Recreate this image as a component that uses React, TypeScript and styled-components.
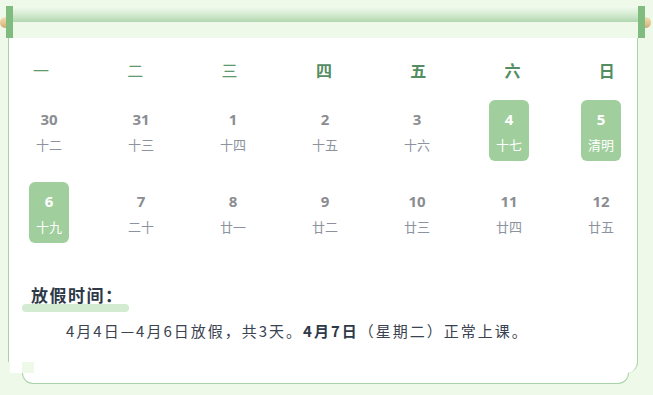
import React from 'react';
import styled, { createGlobalStyle } from 'styled-components';

const GlobalStyle = createGlobalStyle`
  html, body {
    margin: 0;
    padding: 0;
    background: #eff9ea;
  }
  body {
    font-family: "Noto Sans", "Noto Sans CJK SC", sans-serif;
  }
`;

const Page = styled.div`
  width: 653px;
  height: 395px;
  padding-top: 6px;
  box-sizing: border-box;
  background: #eff9ea;
  overflow: hidden;
`;

// scroll rod on top
const RodRow = styled.div`
  display: flex;
  align-items: flex-start;
  width: 651px;
  height: 32px;
`;

const Knob = styled.div<{ $side: 'left' | 'right' }>`
  width: 6px;
  height: 11px;
  margin-top: 11px;
  border-radius: ${(p) => (p.$side === 'left' ? '6px 0 0 6px' : '0 6px 6px 0')};
  background: linear-gradient(180deg, #f3deb4 0%, #e2c38d 60%, #cfae78 100%);
`;

const Bar = styled.div`
  width: 7px;
  height: 32px;
  background: #80bb80;
`;

const Rod = styled.div`
  flex: 1;
  height: 16px;
  background: linear-gradient(180deg, #f3fbef 0%, #d9eed6 45%, #b2d8b0 100%);
`;

const Card = styled.div`
  position: relative;
  width: 630px;
  height: 335px;
  margin-left: 8px;
  box-sizing: border-box;
  background: #fff;
  border-left: 1px solid #a8d3a8;
  border-right: 1px solid #a8d3a8;
  border-bottom-right-radius: 11px;
`;

// little curl on the lower left edge
const CurlPatch = styled.div`
  position: absolute;
  left: -1px;
  bottom: 0;
  width: 26px;
  height: 11px;
  background: linear-gradient(90deg, #eff9ea 0 2px, #fff 2px 14px, #eff9ea 14px 26px);
`;

const Foot = styled.div`
  width: 607px;
  height: 11px;
  margin-left: 22px;
  box-sizing: border-box;
  background: #fff;
  border: 1px solid #a8d3a8;
  border-top: none;
  border-radius: 0 0 11px 11px;
`;

const WeekRow = styled.div`
  display: grid;
  grid-template-columns: repeat(6, 94.3px) auto;
  padding: 22px 0 0 24px;
`;

const WeekDay = styled.div<{ $strong?: boolean }>`
  font-family: "Noto Sans CJK SC", sans-serif;
  font-size: 16px;
  line-height: 20px;
  font-weight: ${(p) => (p.$strong ? 700 : 400)};
  color: ${(p) => (p.$strong ? '#548d62' : '#5f9a6c')};
`;

const DateGrid = styled.div`
  display: grid;
  grid-template-columns: repeat(7, 40px);
  column-gap: 52px;
  row-gap: 21px;
  margin-top: 20px;
  padding-left: 20px;
`;

const DateCell = styled.div<{ $on?: boolean }>`
  display: flex;
  flex-direction: column;
  align-items: center;
  width: 40px;
  height: 61px;
  padding-top: 10px;
  box-sizing: border-box;
  border-radius: 6px;
  background: ${(p) => (p.$on ? '#a0ce9c' : 'transparent')};
`;

const DayNum = styled.div<{ $on?: boolean }>`
  font-size: 15px;
  line-height: 18px;
  font-weight: 700;
  color: ${(p) => (p.$on ? '#ffffff' : '#8b8d92')};
`;

const Lunar = styled.div<{ $on?: boolean }>`
  margin-top: 8px;
  font-family: "Noto Sans CJK SC", sans-serif;
  font-size: 13px;
  line-height: 18px;
  white-space: nowrap;
  color: ${(p) => (p.$on ? '#ffffff' : '#8c939e')};
`;

const Notes = styled.div`
  margin-top: 40px;
  padding-left: 22px;
`;

const Heading = styled.div`
  position: relative;
  display: inline-block;
  font-family: "Noto Sans CJK SC", sans-serif;
  font-size: 17px;
  line-height: 24px;
  font-weight: 700;
  letter-spacing: 1.5px;
  color: #2e3948;

  &::after {
    content: '';
    position: absolute;
    left: -9px;
    right: -5px;
    bottom: -5px;
    height: 8px;
    border-radius: 5px;
    background: #d3ebd1;
    filter: blur(0.6px);
    z-index: 0;
  }

  span {
    position: relative;
    z-index: 1;
  }
`;

const Text = styled.p`
  margin: 12px 0 0;
  text-indent: 35px;
  font-family: "Noto Sans CJK SC", sans-serif;
  font-size: 15px;
  line-height: 24px;
  letter-spacing: 2px;
  color: #3a4351;

  b {
    font-weight: 700;
    color: #2e3948;
  }
`;

const weekDays = [
  { label: '一', strong: false },
  { label: '二', strong: false },
  { label: '三', strong: false },
  { label: '四', strong: true },
  { label: '五', strong: true },
  { label: '六', strong: true },
  { label: '日', strong: true },
];

const days = [
  { n: '30', l: '十二' },
  { n: '31', l: '十三' },
  { n: '1', l: '十四' },
  { n: '2', l: '十五' },
  { n: '3', l: '十六' },
  { n: '4', l: '十七', on: true },
  { n: '5', l: '清明', on: true },
  { n: '6', l: '十九', on: true },
  { n: '7', l: '二十' },
  { n: '8', l: '廿一' },
  { n: '9', l: '廿二' },
  { n: '10', l: '廿三' },
  { n: '11', l: '廿四' },
  { n: '12', l: '廿五' },
];

export default function App() {
  return (
    <Page>
      <GlobalStyle />
      <RodRow>
        <Knob $side="left" />
        <Bar />
        <Rod />
        <Bar />
        <Knob $side="right" />
      </RodRow>

      <Card>
        <WeekRow>
          {weekDays.map((w) => (
            <WeekDay key={w.label} $strong={w.strong}>
              {w.label}
            </WeekDay>
          ))}
        </WeekRow>

        <DateGrid>
          {days.map((d) => (
            <DateCell key={d.n} $on={d.on}>
              <DayNum $on={d.on}>{d.n}</DayNum>
              <Lunar $on={d.on}>{d.l}</Lunar>
            </DateCell>
          ))}
        </DateGrid>

        <Notes>
          <Heading>
            <span>放假时间：</span>
          </Heading>
          <Text>
            4月4日—4月6日放假，共3天。<b>4月7日</b>（星期二）正常上课。
          </Text>
        </Notes>

        <CurlPatch />
      </Card>
      <Foot />
    </Page>
  );
}
